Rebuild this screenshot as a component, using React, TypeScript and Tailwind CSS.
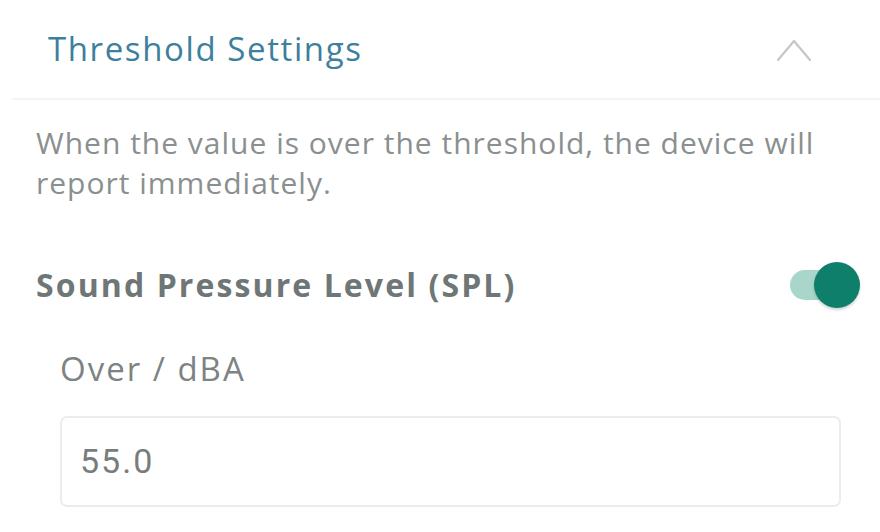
import React, { useState } from 'react';

function Toggle({ on, onChange }: { on: boolean; onChange: (v: boolean) => void }) {
  return (
    <button
      onClick={() => onChange(!on)}
      className="relative w-[72px] h-[48px] flex items-center shrink-0"
      aria-pressed={on}
    >
      <span className={`block w-[56px] h-[30px] ml-[2px] rounded-full ${on ? 'bg-[#a9d6cb]' : 'bg-[#d5d9d9]'}`} />
      <span
        className={`absolute top-[1px] w-[46px] h-[46px] rounded-full shadow-[0_2px_3px_rgba(0,0,0,0.18)] ${
          on ? 'left-[26px] bg-[#0e7f6b]' : 'left-0 bg-white'
        }`}
      />
    </button>
  );
}

export default function App() {
  const [enabled, setEnabled] = useState(true);
  const [value, setValue] = useState('55.0');

  return (
    <div className="w-[880px] h-[532px] bg-white overflow-hidden font-['Open_Sans',sans-serif]">
      {/* Header */}
      <div className="flex items-center justify-between h-[100px] pl-[36px] pr-[68px] ml-[12px] border-b-2 border-[#f3f4f4]">
        <h2 className="text-[33px] text-[#3d7f9c] tracking-[1.6px]">Threshold Settings</h2>
        <svg width="36" height="24" viewBox="0 0 36 24" fill="none" className="mt-[2px]">
          <path d="M2 22 L18 3 L34 22" stroke="#c4c7c7" strokeWidth="2.2" strokeLinecap="round" strokeLinejoin="round" />
        </svg>
      </div>

      <div className="pl-[36px] pr-[40px]">
        <p className="mt-[23px] text-[30px] leading-[40px] text-[#8a9090] tracking-[1px]">
          When the value is over the threshold, the device will report immediately.
        </p>

        <div className="flex items-center justify-between mt-[58px]">
          <span className="text-[32px] font-bold text-[#6e7676] tracking-[2.1px]">Sound Pressure Level (SPL)</span>
          <div className="mr-[-20px]">
            <Toggle on={enabled} onChange={setEnabled} />
          </div>
        </div>

        <div className="pl-[24px]">
          <div className="mt-[35px] text-[33px] text-[#7d8383] tracking-[2px]">Over / dBA</div>
          <input
            value={value}
            onChange={(e) => setValue(e.target.value)}
            className="mt-[22px] w-[781px] h-[91px] border-2 border-[#ebeded] rounded-[7px] pl-[18px] pr-[20px] text-[34px] text-[#777d7d] tracking-[2px] font-['Roboto',sans-serif] outline-none"
          />
        </div>
      </div>
    </div>
  );
}
